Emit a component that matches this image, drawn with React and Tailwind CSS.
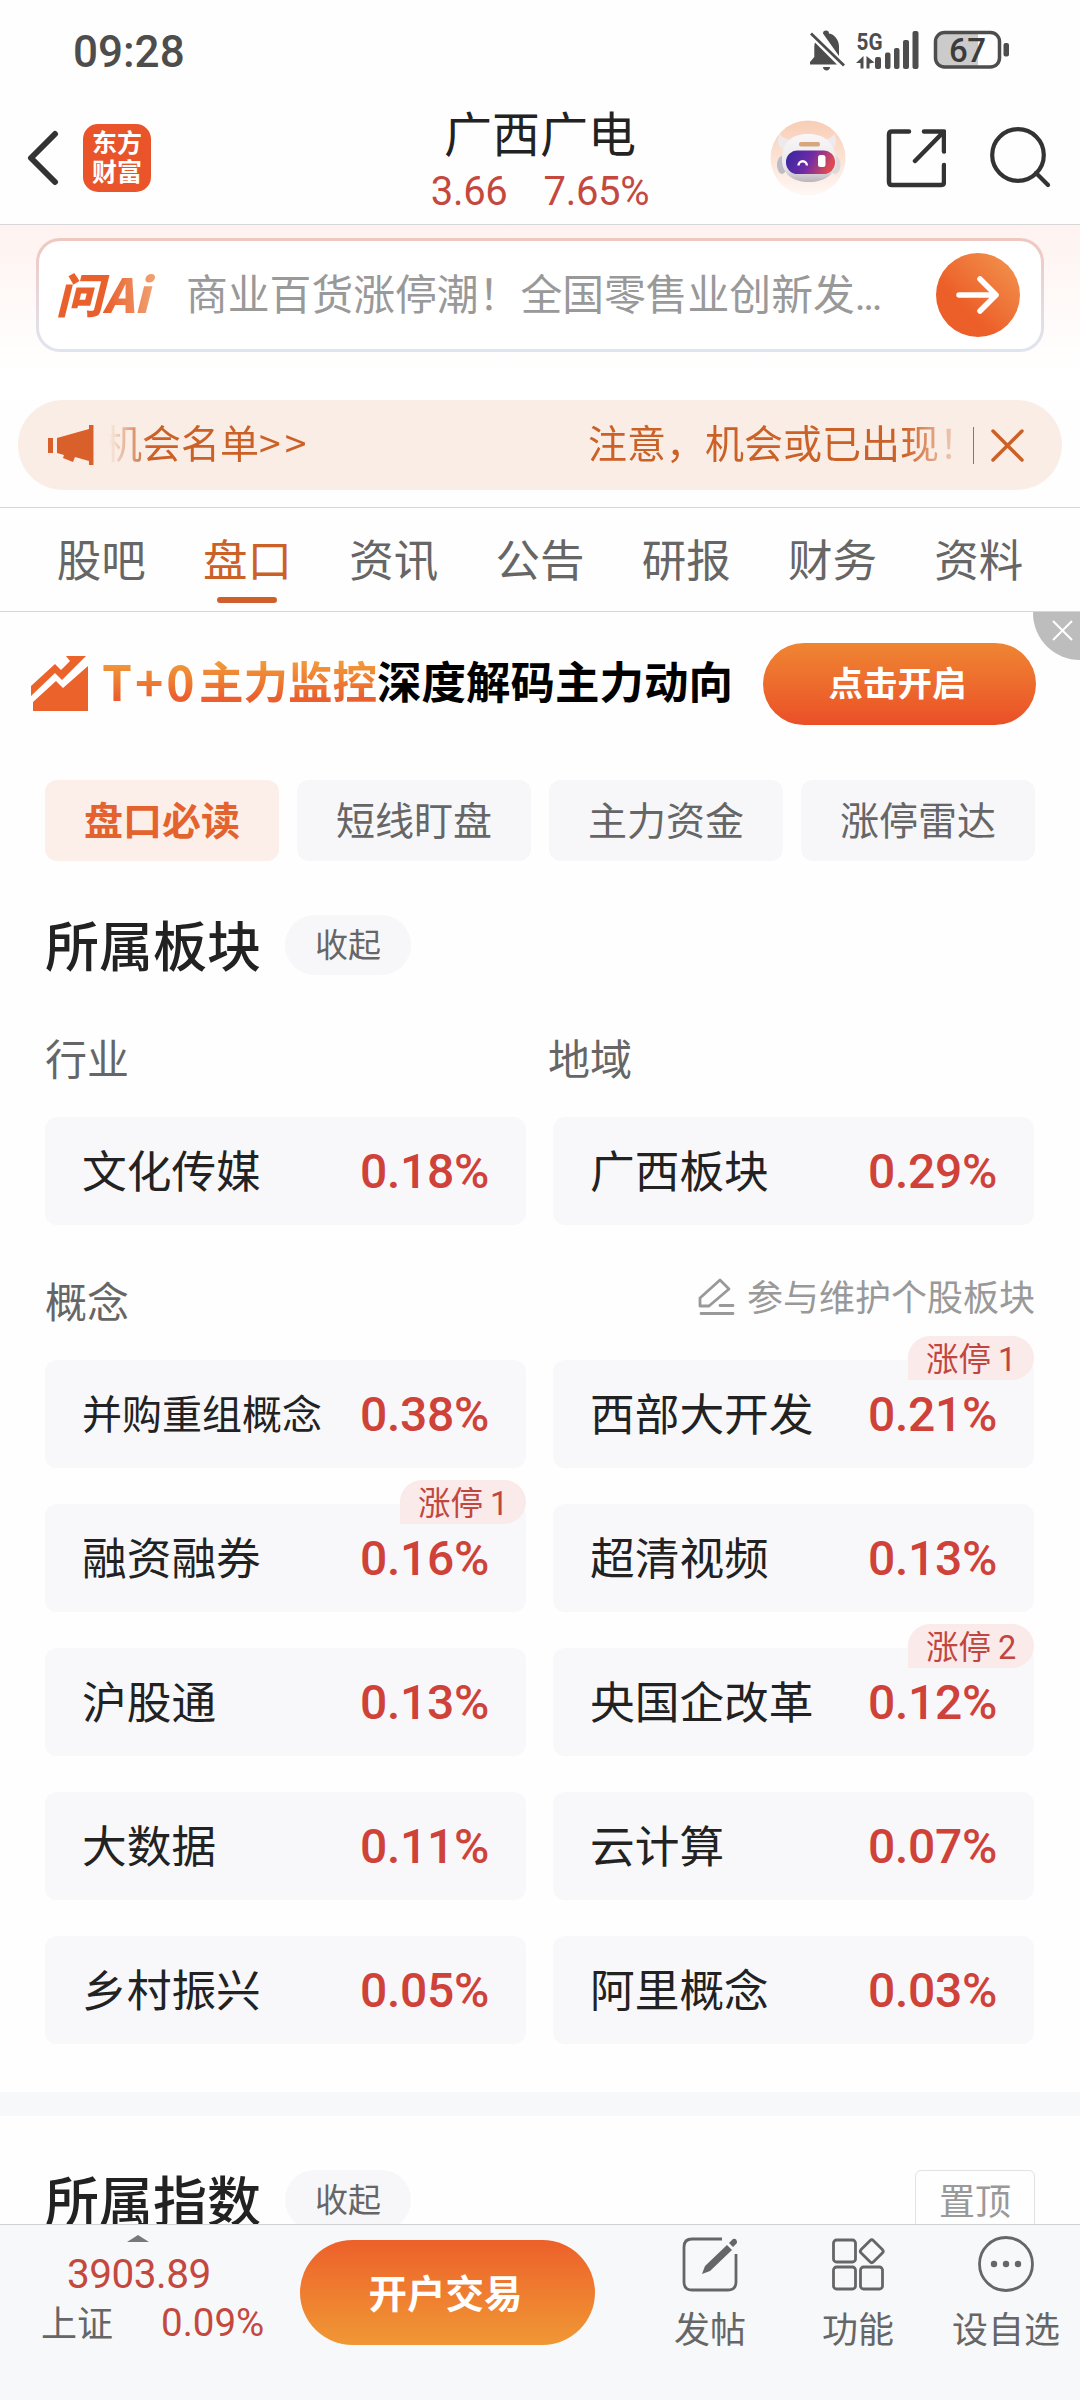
import React from 'react';

const tabs = ['股吧', '盘口', '资讯', '公告', '研报', '财务', '资料'];
const subTabs = ['盘口必读', '短线盯盘', '主力资金', '涨停雷达'];

const concepts = [
  { name: '并购重组概念', value: '0.38%', small: true },
  { name: '西部大开发', value: '0.21%', badge: 1 },
  { name: '融资融券', value: '0.16%', badge: 1 },
  { name: '超清视频', value: '0.13%' },
  { name: '沪股通', value: '0.13%' },
  { name: '央国企改革', value: '0.12%', badge: 2 },
  { name: '大数据', value: '0.11%' },
  { name: '云计算', value: '0.07%' },
  { name: '乡村振兴', value: '0.05%' },
  { name: '阿里概念', value: '0.03%' },
];

function StatusBar() {
  return (
    <div className="h-[101px] flex items-center justify-between pl-[73px] pr-[71px] shrink-0">
      <span className="font-[Roboto] font-medium text-[44px] leading-none text-[#4d4d4d] pt-[2px]">09:28</span>
      <svg width="200" height="42" viewBox="809 31 200 42" fill="#4d4d4d">
        {/* muted bell */}
        <path d="M823 34.500a3 3 0 0 1 6 0c6 1 10 7 10 13v9.500z" />
        <path d="M815 43.500c-.5 1.500-.7 3-.7 5v9.500l-4.300 5v2.500h27z" />
        <path d="M823 68h7c0 4.500-7 4.500-7 0z" />
        <path d="M811 34.500l33 32" stroke="#4d4d4d" strokeWidth="2.800" />
        {/* signal */}
        <text x="856.500" y="50.500" fontFamily="Roboto" fontWeight="700" fontSize="24.500" textLength="26" lengthAdjust="spacingAndGlyphs">5G</text>
        <path d="M863.500 57v12.500h-3v-5.500h-4.500zM866.500 57v12.500h3v-5l5-1z" />
        <rect x="875" y="58" width="6" height="12" rx="2" />
        <rect x="885" y="53.500" width="5.500" height="16.500" rx="2" />
        <rect x="894" y="49" width="5.500" height="21" rx="2" />
        <rect x="903" y="41" width="6" height="29" rx="2" />
        <rect x="912.500" y="32" width="6" height="38" rx="2" />
        {/* battery */}
        <path d="M944 35h34v32h-34a7 7 0 0 1-7-7V42a7 7 0 0 1 7-7z" fill="#cbcbcb" />
        <rect x="935.500" y="33.500" width="64" height="34.500" rx="9" fill="none" stroke="#4d4d4d" strokeWidth="3.500" />
        <rect x="1003.500" y="44" width="5.500" height="13.500" rx="2" />
        <text x="949" y="62.500" fontFamily="Roboto" fontWeight="500" fontSize="33" textLength="37" fill="#3c3c3c">67</text>
      </svg>
    </div>
  );
}

function Robot() {
  return (
    <svg width="76" height="76" viewBox="0 0 76 76">
      <defs>
        <linearGradient id="halo" x1="0" y1="0" x2="0" y2="1">
          <stop offset="0" stopColor="#f8cdb5" />
          <stop offset="1" stopColor="#fff8f5" />
        </linearGradient>
        <linearGradient id="visor" x1="0" y1="0" x2="1" y2="0.250">
          <stop offset="0" stopColor="#3327a0" />
          <stop offset="0.550" stopColor="#6f2ba6" />
          <stop offset="1" stopColor="#dc4a55" />
        </linearGradient>
        <linearGradient id="shell" x1="0" y1="0" x2="0" y2="1">
          <stop offset="0" stopColor="#f9f7f8" />
          <stop offset="0.700" stopColor="#e9e6ea" />
          <stop offset="1" stopColor="#b9b5bb" />
        </linearGradient>
      </defs>
      <circle cx="38" cy="38" r="37.500" fill="url(#halo)" />
      <path d="M10 14c-4 6-2 14 5 17l9-11c-6 0-12-2-14-6zM64 14c4 6 2 14-5 17l-9-11c6 0 12-2 14-6z" fill="#eeeaec" />
      <ellipse cx="12" cy="45" rx="5" ry="9" fill="#bfbbc2" />
      <ellipse cx="65" cy="45" rx="5.500" ry="9" fill="#ddd9dd" />
      <path d="M38 14c17 0 27 9 28 26 1 14-11 22-27 22S12 54 12 40c0-17 9-26 26-26z" fill="url(#shell)" />
      <rect x="29" y="22" width="21" height="4.500" rx="2" fill="#d6a67c" />
      <rect x="16" y="30.500" width="49" height="23.500" rx="11.500" fill="url(#visor)" />
      <path d="M28.500 45.500a4.200 4.200 0 0 1 8.400 0" fill="none" stroke="#fff" strokeWidth="2.400" />
      <rect x="48" y="35" width="7.500" height="12" rx="2.500" fill="#fff" />
    </svg>
  );
}

function Header() {
  return (
    <div className="h-[124px] grid grid-cols-[1fr_auto_1fr] items-center border-b border-[#d6d6d6] shrink-0">
      <div className="flex items-center gap-[24px] pl-[26px] pb-[10px]">
        <svg width="33" height="56" viewBox="0 0 33 56" fill="none" stroke="#333" strokeWidth="6" strokeLinecap="round" strokeLinejoin="round">
          <path d="M29 4L5 28l24 24" />
        </svg>
        <div className="w-[68px] h-[68px] rounded-[15px] bg-[#e9542b] text-white font-bold text-[25px] leading-[29px] text-center pt-[3px]">
          东方<br />财富
        </div>
      </div>
      <div className="flex flex-col items-center gap-[9px] pb-[7px]">
        <div className="text-[48px] leading-[56px] text-[#222]">广西广电</div>
        <div className="flex gap-[36px] font-[Roboto] text-[40px] leading-[48px] tracking-[-0.300px] text-[#c5483f]">
          <span>3.66</span>
          <span>7.65%</span>
        </div>
      </div>
      <div className="flex items-center justify-end pr-[29px] pb-[10px]">
        <Robot />
        <svg className="ml-[40px]" width="60" height="60" viewBox="0 0 60 60" fill="none" stroke="#333" strokeWidth="4.500" strokeLinecap="round" strokeLinejoin="round">
          <path d="M23 3.500H6q-3 0-3 3V54q0 3 3 3h49q3 0 3-3V37M38 3.500h20v20M57 4.500L29 33" />
        </svg>
        <svg className="ml-[43px]" width="62" height="62" viewBox="0 0 62 62" fill="none" stroke="#333" strokeWidth="4.200" strokeLinecap="round">
          <circle cx="29" cy="28" r="25.800" />
          <path d="M47 46l12 12" />
        </svg>
      </div>
    </div>
  );
}

function AskBar() {
  return (
    <div className="h-[175px] px-[36px] pt-[13px] bg-linear-to-b from-[#fef3f0] to-white to-85% shrink-0">
      <div className="h-[114px] rounded-[24px] p-[3px] bg-linear-to-b from-[#efc7c1] to-[#dfe5f0]">
        <div className="h-full rounded-[21px] bg-white flex items-center pl-[17px] pr-[21px]">
          <div className="w-[101px] flex items-baseline font-black italic text-[47px] leading-[60px] pb-[5px] bg-linear-to-r from-[#e9602c] from-50% to-[#f0a474] bg-clip-text text-transparent">
            问Ai
          </div>
          <div className="flex-1 pl-[29px] pb-[2px] text-[41.800px] leading-[56px] text-[#999] whitespace-nowrap">
            商业百货涨停潮！全国零售业创新发<span className="font-[Roboto] tracking-[-2.500px]">...</span>
          </div>
          <div className="w-[84px] h-[84px] rounded-full bg-linear-to-tr from-[#ec5f29] from-35% to-[#f19650] flex items-center justify-center">
            <svg width="44" height="40" viewBox="0 0 44 40" fill="none" stroke="#fff" strokeWidth="5.500" strokeLinecap="round" strokeLinejoin="round">
              <path d="M3 20h37M24 4l16 16-16 16" />
            </svg>
          </div>
        </div>
      </div>
    </div>
  );
}

function Notice() {
  return (
    <div className="h-[107px] px-[18px] shrink-0">
      <div className="h-[90px] rounded-full bg-[#faede5] text-[#cc6128] flex items-center pl-[30px] pr-[37px]">
        <svg width="46" height="40" viewBox="0 0 46 40" fill="#d9602a">
          <path d="M0 13h5v15H0zM9 13l32-9V0h4.500v40H41v-4l-14-4-2 5-10-4 1-3-7-2z" />
        </svg>
        <div className="ml-[15px] w-[851px] overflow-hidden flex whitespace-nowrap text-[39px] leading-[56px] pb-[8px] [mask-image:linear-gradient(to_right,transparent,black_40px,black_795px,transparent_860px)]">
          <span className="w-[485px] ml-[-6px] shrink-0">机会名单<span className="tracking-[4px]">&gt;&gt;</span></span>
          <span>注意，机会或已出现！</span>
        </div>
        <div className="ml-[13px] w-[1.500px] h-[37px] bg-[#cc6128]" />
        <svg className="ml-[16px]" width="35" height="35" viewBox="0 0 35 35" stroke="#cc6128" strokeWidth="3.500" strokeLinecap="round">
          <path d="M3 3l29 29M32 3L3 32" />
        </svg>
      </div>
    </div>
  );
}

function Tabs() {
  return (
    <div className="h-[105px] flex px-[28px] border-y border-[#d6d6d6] shrink-0">
      {tabs.map((t, i) => (
        <div key={t} className={`flex-1 flex flex-col items-center pt-[20px] text-[44.500px] leading-[60px] ${i === 1 ? 'text-[#cc6128]' : 'text-[#666]'}`}>
          {t}
          {i === 1 && <div className="mt-[9px] w-[60px] h-[6px] rounded-full bg-[#cf602c]" />}
        </div>
      ))}
    </div>
  );
}

function Banner() {
  return (
    <div className="relative h-[168px] flex items-start pl-[31px] pr-[44px] pt-[31px] shrink-0">
      <svg className="mt-[13px]" width="58" height="56" viewBox="0 0 58 56" fill="#ec622b">
        <path d="M0 30L24 8l6 6 9-9-4-5h20L31 24l-7-7L0 40z" />
        <path d="M2 46l23-21 7 7L57 10v45H2z" />
      </svg>
      <div className="ml-[13px] flex text-[44.500px] leading-[60px] pt-[7px] font-bold whitespace-nowrap">
        <span className="flex bg-linear-to-b from-[#f09a3a] from-20% to-[#ea5f2d] to-80% bg-clip-text text-transparent">
          <span className="w-[97px] font-bold tracking-[3px] text-[48px]">T+0</span>主力监控
        </span>
        <span className="text-black">深度解码主力动向</span>
      </div>
      <button className="ml-auto w-[273px] h-[82px] rounded-full bg-linear-to-b from-[#ef8533] to-[#ea4e27] text-white font-bold text-[34.500px] leading-[48px] pb-[6px] pr-[4px]">
        点击开启
      </button>
      <div className="absolute top-0 right-0 w-[47px] h-[48px] rounded-bl-full bg-[#bdbdbd] pl-[19px] pt-[8px]">
        <svg width="21" height="21" viewBox="0 0 21 21" stroke="#fff" strokeWidth="2">
          <path d="M1 1l19 19M20 1L1 20" />
        </svg>
      </div>
    </div>
  );
}

function SectionTitle({ title, children }) {
  return (
    <div className="h-[60px] flex items-center">
      <h2 className="text-[54px] leading-[60px] font-medium text-[#222] pb-[3px]">{title}</h2>
      <span className="ml-[24px] w-[126px] h-[60px] rounded-full bg-[#f7f7fa] text-[#666] text-[33px] leading-[57px] text-center">收起</span>
      {children}
    </div>
  );
}

function BoardCard({ name, value, small, badge }) {
  return (
    <div className="relative h-[108px] rounded-[12px] bg-[#f8f8fb] flex items-center justify-between pl-[37px] pr-[37px]">
      <span className={`text-[#222] leading-[60px] pb-[5px] whitespace-nowrap ${small ? 'text-[40px]' : 'text-[44.700px]'}`}>{name}</span>
      <span className="font-[Roboto] font-medium text-[48px] leading-[60px] tracking-[-0.300px] text-[#cf4239] pt-px">{value}</span>
      {badge && (
        <span className="absolute right-0 top-[-24px] w-[126px] h-[44px] rounded-[22px] rounded-bl-none bg-[#faeaea] text-[#c0473f] text-[32.500px] leading-[41px] pl-[18px] whitespace-nowrap">
          涨停<span className="font-[Roboto] pl-[7px]">{badge}</span>
        </span>
      )}
    </div>
  );
}

function Boards() {
  return (
    <div className="px-[45px] h-[1312px] shrink-0">
      <div className="grid grid-cols-4 gap-[18px]">
        {subTabs.map((t, i) => (
          <div key={t} className={`h-[81px] rounded-[12px] text-center text-[39px] leading-[77px] ${i === 0 ? 'bg-[#fceee8] text-[#e4622d] font-bold' : 'bg-[#f7f7fa] text-[#666]'}`}>
            {t}
          </div>
        ))}
      </div>

      <div className="mt-[54px]">
        <SectionTitle title="所属板块" />
      </div>

      <div className="mt-[52px] h-[60px] grid grid-cols-2 gap-[18px] text-[42px] leading-[60px] text-[#666]">
        <span>行业</span>
        <span className="-ml-px">地域</span>
      </div>
      <div className="mt-[30px] mr-px grid grid-cols-2 gap-[27px]">
        <BoardCard name="文化传媒" value="0.18%" />
        <BoardCard name="广西板块" value="0.29%" />
      </div>

      <div className="mt-[45px] h-[60px] flex justify-between">
        <span className="text-[42px] leading-[60px] text-[#666]">概念</span>
        <span className="flex items-start text-[36px] leading-[51px] text-[#999]">
          <svg className="mt-[8px] mr-[12px]" width="37" height="38" viewBox="0 0 37 38" fill="none" stroke="#999" strokeWidth="2.800" strokeLinecap="round" strokeLinejoin="round">
            <path d="M2 28v-8L22 2l9 9-20 17zM22 27.500h13M3 35.500h32" />
          </svg>
          参与维护个股板块
        </span>
      </div>
      <div className="mt-[30px] mr-px grid grid-cols-2 gap-x-[27px] gap-y-[36px]">
        {concepts.map((c) => (
          <BoardCard key={c.name} {...c} />
        ))}
      </div>
    </div>
  );
}

function BottomItem({ label, width, children }) {
  return (
    <div className={`flex flex-col items-center ${width}`}>
      <svg width="58" height="58" viewBox="0 0 58 58" fill="none" stroke="#666" strokeWidth="2.800">
        {children}
      </svg>
      <span className="mt-[9px] text-[36px] leading-[50px] text-[#666]">{label}</span>
    </div>
  );
}

function BottomBar() {
  return (
    <div className="h-[176px] border-t border-[#d0d1d3] bg-[#f7f8fa] flex items-start shrink-0">
      <div className="w-[300px] pl-[41px] pt-[10px]">
        <svg className="ml-[86px]" width="22" height="7" viewBox="0 0 22 7" fill="#77777c">
          <path d="M0 7L11 0l11 7z" />
        </svg>
        <div className="pl-[26px] pt-[8px] font-[Roboto] text-[40.500px] leading-[48px] tracking-[-0.500px] text-[#c5483f]">3903.89</div>
        <div className="flex items-center text-[36px] leading-[46px] text-[#666]">
          <span className="pb-[4px]">上证</span>
          <span className="ml-[48px] font-[Roboto] text-[38.500px] text-[#c5483f]">0.09%</span>
        </div>
      </div>
      <button className="mt-[15px] w-[295px] h-[105px] rounded-full bg-linear-to-b from-[#ec602a] to-[#f09735] text-white font-bold text-[38.500px] leading-[56px] pr-[4px] pb-[3px]">
        开户交易
      </button>
      <div className="flex pt-[10px] pl-[41px]">
        <BottomItem label="发帖" width="w-[148px]">
          <path d="M41 4H11q-8 0-8 8v35q0 8 8 8h36q8 0 8-8V19" />
          <path d="M21 39l3-8L46 10l5 5L29 36zM48 8l4-4q4-1 4 4l-4 4z" fill="#666" stroke="none" />
        </BottomItem>
        <BottomItem label="功能" width="w-[148px]">
          <rect x="4.500" y="5" width="22" height="22" rx="3" />
          <rect x="4.500" y="32" width="22" height="22" rx="3" />
          <rect x="31.500" y="32" width="22" height="22" rx="3" />
          <rect x="34" y="7.500" width="17.500" height="17.500" rx="2.500" transform="rotate(45 42.750 16.250)" />
        </BottomItem>
        <BottomItem label="设自选" width="w-[148px]">
          <circle cx="29" cy="29" r="26.500" />
          <g fill="#666" stroke="none">
            <circle cx="17" cy="29" r="3.200" />
            <circle cx="29" cy="29" r="3.200" />
            <circle cx="41" cy="29" r="3.200" />
          </g>
        </BottomItem>
      </div>
    </div>
  );
}

export default function App() {
  return (
    <div className="w-[1080px] h-[2400px] overflow-hidden bg-[#fefefe] flex flex-col font-['Noto_Sans_CJK_SC',sans-serif]">
      <StatusBar />
      <Header />
      <AskBar />
      <Notice />
      <Tabs />
      <Banner />
      <Boards />
      <div className="h-[24px] bg-[#f7f8fa] shrink-0" />
      <div className="h-[108px] overflow-hidden px-[45px] pt-[54px] shrink-0">
        <SectionTitle title="所属指数">
          <span className="ml-auto w-[120px] h-[60px] rounded-[6px] border border-[#e2e2e2] text-[36px] leading-[56px] text-center text-[#999]">置顶</span>
        </SectionTitle>
      </div>
      <BottomBar />
    </div>
  );
}
